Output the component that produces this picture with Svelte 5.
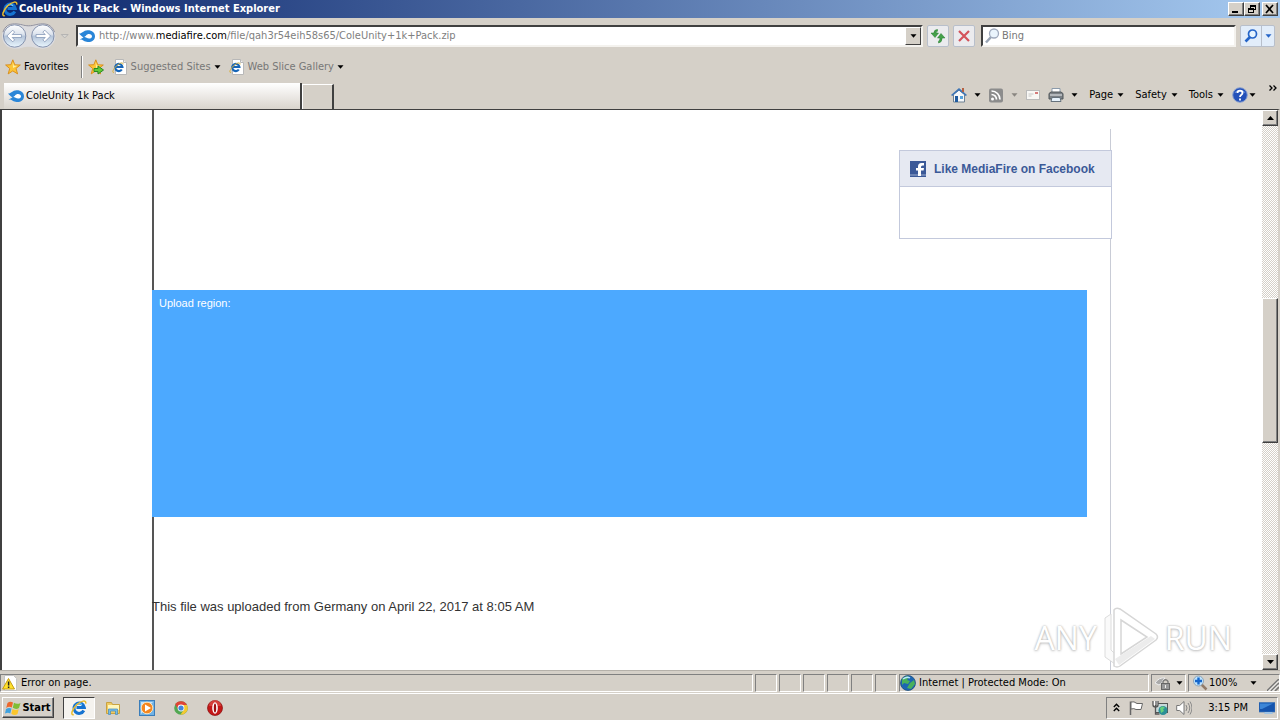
<script>
  const cells = [1, 2, 3, 4, 5, 6];
</script>

{#snippet ie()}
  <svg class="icon" viewBox="0 0 16 16" aria-hidden="true">
    <path d="M12.8 10.5a5.2 5.2 0 1 1 .5-3H5.5" fill="none" stroke="#1673d0" stroke-width="3" />
    <path d="M4 6.7a4.5 4.5 0 0 1 7-2" fill="none" stroke="#6cc8ff" stroke-width="1.2" />
    <path d="M2.800 14.600C-.8 15.600.8 9.400 6 4.500 10 .8 15.600-.5 14.700 3.600" fill="none" stroke="#e9bb2c" stroke-width="1.500" />
  </svg>
{/snippet}

{#snippet iePage()}
  <svg class="icon" viewBox="0 0 16 16" aria-hidden="true">
    <path d="M3.500.5h8l3 3v12h-11z" fill="#fff" stroke="#b8b8b8" />
    <path d="M11.500.5v3h3" fill="#eee" stroke="#b8b8b8" />
    <path d="M9.800 10.500a3.600 3.600 0 1 1 .6-2.500H4" fill="none" stroke="#1766b8" stroke-width="2.200" />
    <path d="M2 13.500c-2.500.5-.8-4 3.500-7.500 3-2.400 6-3 5.500-.5" fill="none" stroke="#d8b03a" />
  </svg>
{/snippet}

{#snippet flame()}
  <svg class="icon" viewBox="0 0 16 16" aria-hidden="true">
    <path d="M0 5.500C3 5.800 4.200 2.400 8.500 2.200c4.200-.2 7.500 2.300 7.500 6s-3.200 6-7.300 5.800C5 13.800 4 11.200.5 11.500c1.500-1 2.800-1.200 4-2.300C3 8.800 1.500 7 0 5.500z" fill="#2a86d8" />
    <path d="M5 8.800C7 8.600 7.300 5.900 10 5.900c1.900 0 3 1 3 2.300s-1.200 2.400-3 2.400C8 10.600 7.200 9.300 5 8.800z" fill="#fff" />
  </svg>
{/snippet}

{#snippet star(add)}
  <svg class="icon" viewBox="0 0 16 16" aria-hidden="true">
    <path d="M7.800.8l2 5 5.500.2-4.300 3.400 1.600 5.500-4.800-3-4.600 3 1.500-5.400L.6 6l5.300-.3z" fill="#fcc436" stroke="#d78a16" stroke-width=".9" />
    <path d="M7.700 3l1.200 3.800h3.600L8 9z" fill="#fff0a0" />
    {#if add}
      <path d="M6 9.500h4V7l5.500 4-5.500 4v-2.500H6z" fill="#62ca37" stroke="#278a22" />
    {/if}
  </svg>
{/snippet}

{#snippet arrow(dim)}
  <svg class="arrow" class:dim viewBox="0 0 7 4" aria-hidden="true"><path d="M.5.3h6L3.500 3.700z" /></svg>
{/snippet}

<div class="window">
  <header class="title">
    {@render ie()}
    <h1>ColeUnity 1k Pack - Windows Internet Explorer</h1>
    <div class="controls">
      <button aria-label="Minimize"><svg viewBox="0 0 12 10"><path d="M2 7h6v2H2z" /></svg></button>
      <button aria-label="Restore"><svg viewBox="0 0 12 10"><path d="M4 1h6v5H8V5h1V3H5v1H4zM2 4h6v5H2zm1 2v2h4V6z" fill-rule="evenodd" /></svg></button>
      <button class="close" aria-label="Close"><svg viewBox="0 0 12 10"><path d="M2 1l7 8M9 1L2 9" stroke="#000" stroke-width="1.700" /></svg></button>
    </div>
  </header>

  <nav class="address-row" aria-label="Navigation">
    <svg class="travel" viewBox="0 0 72 28" role="img" aria-label="Back and forward">
      <defs><linearGradient id="orb" x2="0" y2="1"><stop stop-color="#fff" /><stop offset=".42" stop-color="#dde4ee" /><stop offset=".52" stop-color="#b5c5da" /><stop offset="1" stop-color="#eaf7ff" /></linearGradient></defs>
      <path d="M13 1c7 0 9 2 14.500 2S35 1 42 1c8 0 13 6 13 13s-5 13-13 13c-7 0-9-2-14.500-2S20 27 13 27C5 27 0 21 0 14S5 1 13 1z" fill="#dcdcdf" />
      <path d="M1 10C3 4 7 1.500 13 1.500c7 0 9 2 14.500 2s7.500-2 14.500-2c6 0 10 3 12 8.500" fill="none" stroke="#8c8c98" />
      <circle cx="13" cy="14" r="11.500" fill="url(#orb)" stroke="#8290ab" />
      <circle cx="42" cy="14" r="11.500" fill="url(#orb)" stroke="#8290ab" />
      <path d="M5 14l6-6 2 2-2.500 2.500H20v3h-9.500L13 18l-2 2zM50 14l-6-6-2 2 2.500 2.500H35v3h9.500L42 18l2 2z" fill="#fff" stroke="#8194b4" stroke-width=".8" />
      <path d="M61 12.500h7L64.500 16z" fill="#d9d7d2" stroke="#aaa" stroke-width=".8" />
    </svg>
    <div class="field address">
      {@render flame()}
      <div class="url" role="textbox" aria-label="Address" tabindex="0">http://www.<b>mediafire.com</b>/file/qah3r54eih58s65/ColeUnity+1k+Pack.zip</div>
      <button class="drop" aria-label="Address history">{@render arrow(false)}</button>
    </div>
    <button class="tool" aria-label="Refresh"><svg class="icon" viewBox="0 0 16 16"><path d="M7.500 1.500Q4 1.500 3.800 5H1l4 4.500L8.500 5H6q0-1.500 1.500-1.800zM8.500 15q3.500-.5 3.700-5H15l-4-4.500L7.500 10H10q0 2.500-1.500 3.300z" fill="#45a04a" stroke="#217c2d" stroke-width=".5" /></svg></button>
    <button class="tool" aria-label="Stop"><svg class="icon" viewBox="0 0 16 16"><path d="M3 3l10 10M13 3L3 13" stroke="#d4525a" stroke-width="2.200" /></svg></button>
    <div class="field search">
      <svg class="icon" viewBox="0 0 16 16" aria-hidden="true"><path d="M7 9l-5 5.500" stroke="#9aa5b5" stroke-width="2.500" /><circle cx="10" cy="5.500" r="4.500" fill="#eaf4fc" stroke="#a0aabd" stroke-width="1.300" /></svg>
      <input aria-label="Search" placeholder="Bing" />
    </div>
    <div class="go">
      <button aria-label="Search Bing"><svg class="icon" viewBox="0 0 16 16"><path d="M7 9l-4.500 4.500" stroke="#2464c8" stroke-width="2.600" /><circle cx="9.500" cy="6" r="4" fill="#e5f3ff" stroke="#2464c8" stroke-width="1.700" /></svg></button>
      <button class="blue" aria-label="Search options">{@render arrow(false)}</button>
    </div>
  </nav>

  <nav class="favorites" aria-label="Favorites bar">
    <button class="plain fav">{@render star(false)}Favorites</button>
    <button class="plain" aria-label="Add to favorites bar">{@render star(true)}</button>
    <button class="plain muted">{@render iePage()}Suggested Sites {@render arrow(false)}</button>
    <button class="plain muted">{@render iePage()}Web Slice Gallery {@render arrow(false)}</button>
  </nav>

  <div class="tabs">
    <button class="tab">{@render flame()}ColeUnity 1k Pack</button>
    <button class="new-tab" aria-label="New tab"></button>
    <div class="commands">
      <button class="plain wide" aria-label="Home">
        <svg class="icon" viewBox="0 0 16 16"><path d="M2.500 7.500V15h11V7.500L8 3z" fill="#f6f8fa" stroke="#6f8192" /><path d="M0 8l8-7 8 7-1.200 1L8 3.500 1.200 9z" fill="#3e75b5" /><path d="M11 1h2v4h-2z" fill="#b56142" /><path d="M4 9h3v6H4z" fill="#205b9f" /><path d="M9 9h3v3H9z" fill="#57a4df" /></svg>
        {@render arrow(false)}
      </button>
      <button class="plain wide" aria-label="Feeds">
        <svg class="icon" viewBox="0 0 16 16"><rect x="1" y="1.500" width="14" height="14" rx="2" fill="#8c8c8c" /><circle cx="4.500" cy="12" r="1.500" fill="#fff" /><path d="M3.500 7.500a5 5 0 0 1 5 5M3.500 4a8.500 8.500 0 0 1 8.500 8.500" fill="none" stroke="#fff" stroke-width="1.700" /></svg>
        {@render arrow(true)}
      </button>
      <button class="plain wide" aria-label="Read mail"><svg class="icon" viewBox="0 0 16 16"><rect x="1.500" y="3.500" width="13" height="9" fill="#f8f7f5" stroke="#bbb" /><path d="M3.500 7h5M3.500 9h3" stroke="#c6c6c6" /><path d="M10 5h3v2h-3z" fill="#d57b7b" /></svg></button>
      <button class="plain print" aria-label="Print">
        <svg class="icon" viewBox="0 0 16 16"><path d="M4 1.500h8V7H4z" fill="#fff" stroke="#8b9aaa" /><path d="M1 6.500l2-1.500h10l2 1.500V12H1z" fill="#7b8085" stroke="#51565b" /><path d="M2 8h12" stroke="#d2d6d8" stroke-width="1.300" /><path d="M4 10.500h8l1 4H3z" fill="#e7f2fb" stroke="#65717c" /></svg>
        {@render arrow(false)}
      </button>
      <button class="plain">Page {@render arrow(false)}</button>
      <button class="plain">Safety {@render arrow(false)}</button>
      <button class="plain">Tools {@render arrow(false)}</button>
      <button class="plain help" aria-label="Help">
        <svg class="icon" viewBox="0 0 16 16"><circle cx="8" cy="8" r="7.300" fill="#2451b9" stroke="#8ba1cf" /><path d="M2.500 6a6 5 0 0 1 11 0q-5-2-11 0z" fill="#6e96e1" /><path d="M5.500 6c0-3.200 5-3.200 5 0 0 1.800-2.500 1.700-2.500 4M8 11.500v2" fill="none" stroke="#fff" stroke-width="1.800" /></svg>
        {@render arrow(false)}
      </button>
      <button class="plain more" aria-label="More commands"><svg viewBox="0 0 8 6"><path d="M.5.5L3 3 .5 5.500M4.500.5L7 3 4.500 5.500" fill="none" stroke="#000" stroke-width="1.300" /></svg></button>
    </div>
  </div>

  <div class="viewport">
    <main>
      <section class="like">
        <h2>
          <svg class="icon" viewBox="0 0 16 16" aria-hidden="true"><path d="M0 0h16v16H0z" fill="#3b5998" /><path d="M0 13h16v2H0z" fill="#6d84b4" /><path d="M14 2v2.500h-1.500q-1.500 0-1.500 1.500v1h3l-.4 2.500H11V15H8V9.500H6V7h2V5.500Q8 2 11.500 2z" fill="#fff" /></svg>
          Like MediaFire on Facebook
        </h2>
      </section>
      <section class="region">Upload region:</section>
      <p>This file was uploaded from Germany on April 22, 2017 at 8:05 AM</p>
    </main>
    <div class="scrollbar" aria-hidden="true">
      <span class="raised cap"><svg class="arrow" viewBox="0 0 7 4"><path d="M0 4h7L3.500 0z" /></svg></span>
      <span class="before"></span>
      <span class="raised thumb"></span>
      <span class="after"></span>
      <span class="raised cap"><svg class="arrow" viewBox="0 0 7 4"><path d="M0 0h7L3.500 4z" /></svg></span>
    </div>
    <div class="watermark">
      <span>ANY</span>
      <svg viewBox="0 0 56 64" aria-hidden="true">
        <path d="M2 12l6-4v36l8 8-4 6-10-7z" fill="#fafafa" stroke="#dcdcdc" />
        <path d="M11 4q2-3 6-1l36 25q3 3 0 6L17 60q-3 2-6 0zM18 14v34l26-17z" fill="#fff" fill-rule="evenodd" stroke="#d6d6d6" stroke-width="1.500" />
        <path d="M12 53l36-23 4 3-36 26z" fill="#ececec" />
      </svg>
      <span>RUN</span>
    </div>
  </div>

  <footer class="status">
    <div class="cell message">
      <svg class="icon" viewBox="0 0 16 16" aria-hidden="true"><path d="M2.500.5h9l3 3v12h-12z" fill="#fff" stroke="#c5c5c5" /><path d="M6.500 3.500L12.500 14H.6z" fill="#ffe12b" stroke="#c59b12" /><path d="M6.600 6.500v4M6.600 11.500v1.500" stroke="#222" stroke-width="1.500" /></svg>
      Error on page.
    </div>
    {#each cells as cell (cell)}<div class="cell blank"></div>{/each}
    <div class="cell zone">
      <svg class="icon" viewBox="0 0 16 16" aria-hidden="true"><circle cx="8" cy="8" r="7.500" fill="#1c66b2" stroke="#154675" stroke-width=".7" /><path d="M2 4q4-4 7-2L7 5l3 1-2 3-4-1-2 2zM10 8l4-3 1 4-4 5-4-1z" fill="#48b15b" /><path d="M3 4q4-3 7-1" stroke="#b9e6ff" stroke-width="1.500" fill="none" /></svg>
      Internet | Protected Mode: On
    </div>
    <div class="cell lock">
      <svg class="icon" viewBox="0 0 16 16" aria-hidden="true"><path d="M0 8q4-6 10-5-3 2-3 5l-3 2z" fill="#aaa" stroke="#eee" /><path d="M8 9V6.500q2.500-3.500 5 0V9" fill="none" stroke="#777" stroke-width="1.300" /><rect x="6.500" y="8.500" width="8" height="6" fill="#999" stroke="#666" /><path d="M10.500 10v3" stroke="#eee" /></svg>
      {@render arrow(false)}
    </div>
    <div class="cell zoom">
      <svg class="icon" viewBox="0 0 16 16" aria-hidden="true"><path d="M9.500 9.500l5 5" stroke="#927b68" stroke-width="2.500" /><circle cx="6.500" cy="6" r="5" fill="#bce3ff" stroke="#90a4b6" /><path d="M6.500 2.500v7M3 6h7" stroke="#1566cb" stroke-width="2.400" /></svg>
      <span>100%</span>{@render arrow(false)}
      <svg class="grip" viewBox="0 0 12 12" aria-hidden="true"><path d="M0 12L12 0M4 12l8-8M8 12l4-4" stroke="#777" stroke-width="1.600" /><path d="M1.500 12L12 1.500M5.500 12L12 5.500" stroke="#fff" /></svg>
    </div>
  </footer>

  <footer class="taskbar">
    <button class="start">
      <svg class="icon" viewBox="0 0 16 16" aria-hidden="true"><path d="M2.500 3Q5 1 8 2.500L6.800 7.500Q4 6 1.200 8z" fill="#ed672c" /><path d="M9 2.800q3 2 6.500.2L14 8q-3 2-6.200-.2z" fill="#80bd36" /><path d="M1 9q3-2 5.500-.4L5.300 13.500Q3 12 0 13.500z" fill="#3fa2df" /><path d="M7.500 8.900q3 2 6.200.3L12.500 14q-3 2-6.200-.3z" fill="#fbc62c" /></svg>
      Start
    </button>
    <button class="running" aria-label="Internet Explorer">{@render ie()}</button>
    <button class="plain" aria-label="File Explorer"><svg class="icon" viewBox="0 0 16 16"><path d="M1.500 2.500h5l1 2h7v9h-13z" fill="#efca63" stroke="#c9a241" /><path d="M3 5h11v5H3z" fill="#fff6bb" /><path d="M3.500 14.500V9h9v5.500h-2V11h-5v3.500z" fill="#79bce6" stroke="#438bbd" stroke-width=".7" /></svg></button>
    <button class="plain" aria-label="Media Player"><svg class="icon" viewBox="0 0 16 16"><rect x=".5" y=".5" width="15" height="15" fill="#71b2e5" stroke="#3a7dba" /><path d="M2 2h12L2 14z" fill="#c4e3f8" /><circle cx="8" cy="8" r="5.800" fill="#f4861f" stroke="#ffe1b2" /><path d="M6 4.500L12 8l-6 3.500z" fill="#fff" /></svg></button>
    <button class="plain" aria-label="Chrome"><svg class="icon" viewBox="0 0 16 16"><circle cx="8" cy="8" r="6.800" fill="#52a752" /><path d="M2.200 4.300A6.800 6.800 0 0 1 14 5H8L5.300 9.600z" fill="#df4437" /><path d="M14 5a6.800 6.800 0 0 1-6.600 9.800L11 9.500 9.500 5z" fill="#f4c831" /><circle cx="8" cy="8" r="3.400" fill="#fff" /><circle cx="8" cy="8" r="2.600" fill="#4285dc" /></svg></button>
    <button class="plain" aria-label="Opera"><svg class="icon" viewBox="0 0 16 16"><circle cx="8" cy="8" r="7.500" fill="#c41818" stroke="#861010" stroke-width=".7" /><path d="M2 6a6 6 0 0 1 12 0z" fill="#e35a50" opacity=".6" /><ellipse cx="8" cy="8" rx="2.800" ry="5.700" fill="#fff" /><ellipse cx="8" cy="8" rx="1.200" ry="4.500" fill="#9d0f0f" /></svg></button>
    <div class="tray">
      <svg class="chevrons" viewBox="0 0 7 9" aria-hidden="true"><path d="M.8 4l2.700-2.700L6.200 4M.8 8l2.700-2.700L6.200 8" fill="none" stroke="#000" stroke-width="1.400" /></svg>
      <svg class="icon" viewBox="0 0 16 16" aria-hidden="true"><path d="M2.500 15V1.500" stroke="#666" stroke-width="1.500" /><path d="M3 2q3-1 6 1.500h5.500L13 9.500H8Q6 8 3 9z" fill="#fff" stroke="#666" /></svg>
      <svg class="icon" viewBox="0 0 16 16" aria-hidden="true"><rect x="3.500" y="3.500" width="12" height="9" fill="#c7d9d9" stroke="#555" /><path d="M1 1h5v4H1z" fill="#fff" /><path d="M4 1v5M1 1v4q0 2 2.500 2T6 5V1M3.500 7v7h4" fill="none" stroke="#555" stroke-width="1.300" /><circle cx="11" cy="10.500" r="4.500" fill="#2c8f96" /><path d="M8 8q3-3 5 0l-2 1 1 2-3 2z" fill="#66d07c" /></svg>
      <svg class="icon" viewBox="0 0 16 16" aria-hidden="true"><path d="M.7 5.500h3L8 1.500v13l-4.300-4h-3z" fill="#fff" stroke="#777" /><path d="M10 5q2 3 0 6M12 3q3.500 5 0 10M14 1.500q4 6.500 0 13" fill="none" stroke="#888" /></svg>
      <time>3:15 PM</time>
      <svg class="icon" viewBox="0 0 16 16" aria-hidden="true"><path d="M0 2.500h16V12H0z" fill="#1554ad" stroke="#4177b8" stroke-width=".7" /><path d="M1 3.500h13L3 9H1z" fill="#3c86d7" /><path d="M6 12h7l1 2H5z" fill="#9fc3e4" /></svg>
    </div>
  </footer>
</div>

<style>
  :global(body) { margin: 0; }
  .window, .window * { box-sizing: border-box; }
  .window {
    height: 100vh;
    display: flex;
    flex-direction: column;
    overflow: hidden;
    background: #d5d0c8;
    color: #000;
    font: 11px/14px "DejaVu Sans Condensed", "DejaVu Sans", sans-serif;
  }
  button, input {
    font: inherit;
    color: inherit;
    margin: 0;
    padding: 0;
    border: 0;
    border-radius: 0;
    background: none;
  }
  button { display: flex; align-items: center; justify-content: center; flex: none; }
  svg { display: block; flex: none; }
  h1, h2, p { margin: 0; }
  .icon { width: 16px; height: 16px; }
  .arrow { width: 7px; height: 4px; }
  .dim { opacity: 0.35; }

  .title {
    flex: none;
    height: 18px;
    display: flex;
    align-items: center;
    gap: 1px;
    padding: 0 2px;
    background: linear-gradient(90deg, #0b256b, #a6caf0);
    color: #fff;
  }
  h1 { flex: 1; font-size: 11px; line-height: 16px; }
  .controls { display: flex; }
  .controls button, .raised {
    background: #d5d0c8;
    border: 1px solid;
    border-color: #fff #404040 #404040 #fff;
    box-shadow: inset -1px -1px #808080;
  }
  .controls button { width: 16px; height: 14px; }
  .controls svg { width: 12px; height: 10px; }
  .controls .close { margin-left: 2px; }

  .address-row {
    flex: none;
    height: 35px;
    display: flex;
    align-items: center;
    padding: 0 5px 0 2px;
    gap: 4px;
  }
  .travel { width: 70px; height: 28px; }
  .field {
    height: 22px;
    display: flex;
    align-items: center;
    background: #fff;
    border: 2px solid;
    border-color: #404040 #f4f2ee #f4f2ee #404040;
  }
  .address { flex: 1; min-width: 0; padding-left: 1px; gap: 4px; color: #808080; }
  .url { flex: 1; min-width: 0; overflow: hidden; white-space: nowrap; }
  .url b { font-weight: normal; color: #000; }
  .drop {
    width: 16px;
    height: 18px;
    background: #d5d0c8;
    border: 1px solid;
    border-color: #fff #404040 #404040 #fff;
  }
  .tool, .go { height: 22px; background: #ebebee; border: 1px solid #b8bfcb; border-radius: 2px; }
  .tool { width: 22px; }
  .search { flex: 0 1 255px; min-width: 80px; margin-left: 2px; gap: 2px; padding-left: 1px; }
  input { flex: 1; min-width: 0; outline: 0; }
  input::placeholder { color: #777; opacity: 1; }
  .go { display: flex; background: #e2edfa; }
  .go button { width: 20px; height: 20px; }
  .go .blue { width: 13px; border-left: 1px solid #b8bfcb; }
  .blue .arrow { fill: #2464c8; }

  .favorites { flex: none; height: 27px; display: flex; align-items: center; padding-left: 5px; gap: 8px; }
  .plain { gap: 3px; white-space: nowrap; }
  .fav { height: 22px; padding-right: 12px; border-right: 1px solid #808080; box-shadow: 1px 0 #fff; margin-right: -2px; }
  .muted { color: #777; }
  .muted .arrow { fill: #000; }

  .tabs { flex: none; height: 29px; display: flex; align-items: flex-end; padding: 0 3px 0 4px; }
  .tab {
    flex: 0 1 298px;
    height: 26px;
    justify-content: flex-start;
    gap: 2px;
    padding-left: 4px;
    background: linear-gradient(#fff, #d9d4cd);
    border-right: 2px solid #404040;
  }
  .new-tab { width: 32px; height: 25px; border: solid; border-width: 1px 2px 0 1px; border-color: #fff #404040 #fff #fff; }
  .commands { flex: 1; height: 29px; display: flex; align-items: center; justify-content: flex-end; gap: 11px; }
  .commands .plain { gap: 4px; }
  .commands .wide { gap: 7px; margin-right: -4px; }
  .commands .print { gap: 7px; }
  .commands .help { gap: 1px; margin: 0 2px 0 -3px; }
  .commands .more { align-self: flex-start; padding-top: 5px; }
  .more svg { width: 8px; height: 6px; }

  .viewport {
    position: relative;
    flex: 1;
    min-height: 0;
    display: flex;
    background: #fff;
    border: solid #404040;
    border-width: 1px 0 0 2px;
    border-right: 2px solid #d5d0c8;
  }
  main {
    width: 960px;
    min-width: 0;
    margin: 0 auto;
    padding-top: 40px;
    background:
      linear-gradient(#555, #555) 0 0 / 2px 100% no-repeat,
      linear-gradient(#c9ccd6, #c9ccd6) calc(100% - 1px) 19px / 1px 100% no-repeat;
    font-family: "Liberation Sans", Arial, sans-serif;
  }
  .like { width: 213px; height: 89px; margin-left: auto; border: 1px solid #c3c9dc; background: #fff; }
  h2 {
    height: 36px;
    display: flex;
    align-items: center;
    gap: 8px;
    padding-left: 10px;
    background: #e6e9f2;
    border-bottom: 1px solid #c3c9dc;
    color: #3b5998;
    font-size: 12px;
    line-height: 16px;
    white-space: nowrap;
  }
  .region { height: 227px; margin: 51px 25px 0 0; padding: 6px 7px; background: #4ca9ff; color: #fff; }
  p { margin-top: 80px; font-size: 13px; line-height: 20px; color: #333; }

  .scrollbar {
    flex: none;
    width: 16px;
    display: flex;
    flex-direction: column;
    background: repeating-conic-gradient(#d5d0c8 0 25%, #fff 0 50%) 0 0 / 2px 2px;
  }
  .cap { height: 16px; display: grid; place-items: center; }
  .before { flex: 173; }
  .thumb { flex: 143; }
  .after { flex: 212; }

  .watermark {
    position: absolute;
    right: 46px;
    bottom: 0;
    height: 64px;
    display: flex;
    align-items: center;
    gap: 6px;
    color: #fff;
    font: 32px/48px "Open Sans", sans-serif;
    text-shadow: 0 0 2px #aaa, 0 1px 3px #ccc;
  }
  .watermark svg { width: 56px; height: 64px; }

  .status { flex: none; height: 23px; display: flex; gap: 2px; padding: 3px 0 1px; border-top: 1px solid #b5b1aa; }
  .cell {
    display: flex;
    align-items: center;
    gap: 3px;
    border: 1px solid;
    border-color: #808080 #fff #fff #808080;
    white-space: nowrap;
  }
  .message { flex: 1; min-width: 0; padding-left: 1px; }
  .blank { width: 22px; }
  .zone { width: 250px; }
  .lock { width: 35px; gap: 5px; padding-left: 3px; }
  .zoom { width: 92px; padding-left: 3px; gap: 1px; }
  .zoom span { flex: 1; }
  .grip { width: 12px; height: 12px; align-self: flex-end; margin-left: 9px; }

  .taskbar { flex: none; height: 27px; display: flex; align-items: center; gap: 18px; padding: 1px 2px 0; border-top: 1px solid #fff; }
  .start {
    width: 52px;
    height: 21px;
    gap: 1px;
    font-weight: bold;
    border: 1px solid;
    border-color: #fff #404040 #404040 #fff;
    box-shadow: inset -1px -1px #808080;
  }
  .running {
    width: 32px;
    height: 22px;
    margin: 0 -8px 0 -9px;
    background: #f5f3ef;
    border: 1px solid;
    border-color: #404040 #fff #fff #404040;
  }
  .tray {
    height: 22px;
    display: flex;
    align-items: center;
    gap: 8px;
    margin-left: auto;
    padding: 0 2px 0 6px;
    border: 1px solid;
    border-color: #808080 #fff #fff #808080;
  }
  .chevrons { width: 7px; height: 9px; }
  time { margin: 0 3px 0 8px; white-space: nowrap; }
</style>
